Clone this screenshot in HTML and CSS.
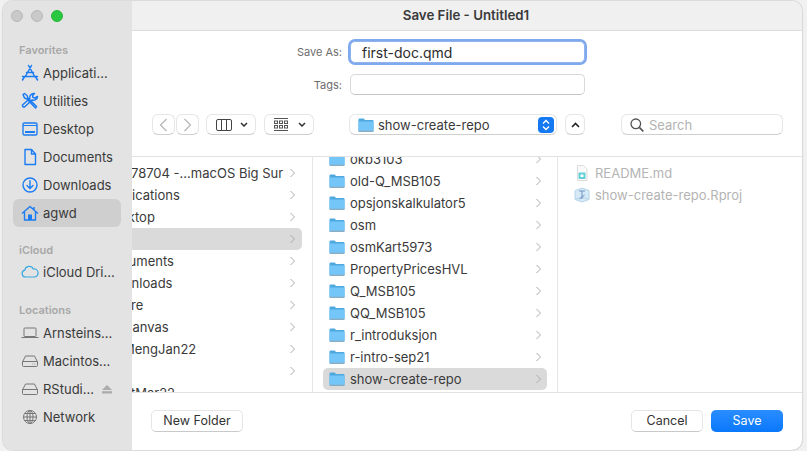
FILE: index.html
```html
<!DOCTYPE html>
<html lang="en">
<head>
  <meta charset="UTF-8">
  <title>Save File - Untitled1</title>
  <link rel="stylesheet" href="styles.css">
</head>
<body>
  <svg class="defs" width="0" height="0">
    <symbol id="folder" viewBox="0 0 16 14">
      <path d="M1.5 0.5h4.2l1.3 1.5h7.5a1 1 0 0 1 1 1v9.5a1 1 0 0 1-1 1h-13a1 1 0 0 1-1-1v-11a1 1 0 0 1 1-1z" fill="#4fa9df"/>
      <path d="M0.5 3.6h15v8.9a1 1 0 0 1-1 1h-13a1 1 0 0 1-1-1z" fill="#74c6f8"/>
      <path d="M0.5 12.8h15v0.4a0.6 0.6 0 0 1-0.6 0.6H1.1a0.6 0.6 0 0 1-0.6-0.6z" fill="#8aa3b3"/>
    </symbol>
    <symbol id="chev" viewBox="0 0 7 10">
      <path d="M1.5 1l4 4-4 4" fill="none" stroke="#ababab" stroke-width="1"/>
    </symbol>
  </svg>

  <div class="window">
    <aside class="sidebar">
      <div class="lights">
        <span class="light"></span>
        <span class="light"></span>
        <span class="light green"></span>
      </div>

      <h4 class="side-head">Favorites</h4>
      <ul class="side-list">
        <li class="side-item">
          <svg class="side-icon" viewBox="0 0 18 18" fill="none" stroke="#1b7cf3" stroke-width="1.5" stroke-linecap="round"><path d="M10.5 1.5L4 13M7.5 1.5L14 13M1.5 12.5h15M5.5 8.5h7M3 13.5l-1.5 2.5M15 13.5l1.5 2.5"/></svg>
          <span>Applicati...</span>
        </li>
        <li class="side-item">
          <svg class="side-icon" viewBox="0 0 18 18" fill="none" stroke="#1b7cf3" stroke-width="1.5" stroke-linejoin="round"><path d="M2 2.5L3.5 1.5 6 3.5 7 6 15.5 14.5 14.5 16 6 7 3.500 6z"/><path d="M16.500 4.500a4 4 0 0 1-5.500 3.500L3.500 15a1.600 1.600 0 0 1-2-2L8.800 6.500a4 4 0 0 1 4.700-5L11.500 3.500l0.500 2 2 0.500z"/></svg>
          <span>Utilities</span>
        </li>
        <li class="side-item">
          <svg class="side-icon" viewBox="0 0 18 18" fill="none" stroke="#1b7cf3" stroke-width="1.400"><rect x="2" y="3" width="14" height="12" rx="1.500"/><path d="M2 5.500h14" stroke-width="1.200"/><rect x="4" y="11" width="10" height="2" fill="#1b7cf3" stroke="none"/></svg>
          <span>Desktop</span>
        </li>
        <li class="side-item">
          <svg class="side-icon" viewBox="0 0 18 18" fill="none" stroke="#1b7cf3" stroke-width="1.400" stroke-linejoin="round"><path d="M4 1.500h6.500L14.500 6v10.500H4z"/><path d="M10.500 1.500V6h4"/></svg>
          <span>Documents</span>
        </li>
        <li class="side-item">
          <svg class="side-icon" viewBox="0 0 18 18" fill="none" stroke="#1b7cf3" stroke-width="1.400" stroke-linecap="round"><circle cx="9" cy="9" r="7"/><path d="M9 4.800v7.400M6 9.500l3 3 3-3"/></svg>
          <span>Downloads</span>
        </li>
        <li class="side-item active">
          <svg class="side-icon" viewBox="0 0 18 18" fill="none" stroke="#1b7cf3" stroke-width="1.400" stroke-linejoin="round"><path d="M1 9.500L9 2.500l8 7M3.500 8v8h11V8M13 3v2.500"/><rect x="7" y="10.500" width="4" height="5.500" fill="#1b7cf3" stroke="none"/></svg>
          <span>agwd</span>
        </li>
      </ul>

      <h4 class="side-head head-icloud">iCloud</h4>
      <ul class="side-list">
        <li class="side-item">
          <svg class="side-icon" viewBox="0 0 18 18" fill="none" stroke="#3aa8e2" stroke-width="1.200"><path d="M4.500 14a3.500 3.500 0 0 1-0.700-6.900A4.500 4.500 0 0 1 12.300 6a4 4 0 0 1 1.500 8z"/></svg>
          <span>iCloud Dri...</span>
        </li>
      </ul>

      <h4 class="side-head head-locations">Locations</h4>
      <ul class="side-list">
        <li class="side-item">
          <svg class="side-icon" viewBox="0 0 18 18" fill="none" stroke="#777" stroke-width="1"><rect x="3" y="4" width="12" height="8.500" rx="0.800"/><path d="M0.500 13.500h17"/></svg>
          <span>Arnsteins...</span>
        </li>
        <li class="side-item">
          <svg class="side-icon" viewBox="0 0 18 18" fill="none" stroke="#777" stroke-width="1"><path d="M4.500 4h9l3 6v3.500a1 1 0 0 1-1 1h-13a1 1 0 0 1-1-1V10z"/><path d="M1.500 9.500h15M11.500 12h0.700M13.500 12h0.700"/></svg>
          <span>Macintos...</span>
        </li>
        <li class="side-item">
          <svg class="side-icon" viewBox="0 0 18 18" fill="none" stroke="#777" stroke-width="1"><path d="M4.500 4h9l3 6v3.500a1 1 0 0 1-1 1h-13a1 1 0 0 1-1-1V10z"/><path d="M1.500 9.500h15"/></svg>
          <span>RStudi...</span>
          <svg class="eject" viewBox="0 0 10 9" fill="#ababab"><path d="M5 0l5 5H0z"/><rect y="6.200" width="10" height="2.300"/></svg>
        </li>
        <li class="side-item">
          <svg class="side-icon" viewBox="0 0 18 18" fill="none" stroke="#777" stroke-width="1"><circle cx="9" cy="9" r="6.500"/><ellipse cx="9" cy="9" rx="3" ry="6.500"/><path d="M9 2.500v13M2.500 9h13M3.500 5.500h11M3.500 12.500h11"/></svg>
          <span>Network</span>
        </li>
      </ul>
    </aside>

    <main class="main">
      <header class="titlebar">Save File - Untitled1</header>

      <form class="save-form">
        <label class="form-label" for="saveAs">Save As:</label>
        <input class="form-field focused" id="saveAs" type="text" value="first-doc.qmd">
        <label class="form-label" for="tags">Tags:</label>
        <input class="form-field" id="tags" type="text">
      </form>

      <div class="toolbar">
        <div class="nav-pair">
          <button class="tool-btn nav-btn" type="button"><svg width="9" height="14" viewBox="0 0 9 14" fill="none" stroke="#b5b5b5" stroke-width="1.200"><path d="M7.500 1L1.500 7l6 6"/></svg></button>
          <button class="tool-btn nav-btn" type="button"><svg width="9" height="14" viewBox="0 0 9 14" fill="none" stroke="#b5b5b5" stroke-width="1.200"><path d="M1.500 1l6 6-6 6"/></svg></button>
        </div>
        <button class="tool-btn view-btn first-view" type="button">
          <svg width="16" height="12" viewBox="0 0 16 12" fill="none" stroke="#444" stroke-width="1"><rect x="0.500" y="0.500" width="15" height="11" rx="1.500"/><path d="M5.500 0.500v11M10.500 0.500v11"/></svg>
          <svg class="caret" width="8" height="5" viewBox="0 0 8 5" fill="none" stroke="#333" stroke-width="1.500"><path d="M1 1l3 3 3-3"/></svg>
        </button>
        <button class="tool-btn view-btn" type="button">
          <svg width="14" height="13" viewBox="0 0 14 13" fill="none" stroke="#555" stroke-width="1"><path d="M0 0.500h14M0 12.500h14"/><rect x="0.500" y="3" width="3" height="2.500"/><rect x="5.500" y="3" width="3" height="2.500"/><rect x="10.500" y="3" width="3" height="2.500"/><rect x="0.500" y="7.500" width="3" height="2.500"/><rect x="5.500" y="7.500" width="3" height="2.500"/><rect x="10.500" y="7.500" width="3" height="2.500"/></svg>
          <svg class="caret" width="8" height="5" viewBox="0 0 8 5" fill="none" stroke="#333" stroke-width="1.500"><path d="M1 1l3 3 3-3"/></svg>
        </button>
        <button class="tool-btn path-btn" type="button">
          <svg class="folder" width="16" height="14"><use href="#folder"/></svg>
          <span>show-create-repo</span>
          <span class="stepper"><svg width="8" height="12" viewBox="0 0 8 12" fill="none" stroke="#fff" stroke-width="1.400"><path d="M1 4.500l3-3 3 3M1 7.500l3 3 3-3"/></svg></span>
        </button>
        <button class="tool-btn up-btn" type="button"><svg width="9" height="6" viewBox="0 0 9 6" fill="none" stroke="#222" stroke-width="1.600"><path d="M1 5l3.500-3.500L8 5"/></svg></button>
        <div class="search">
          <svg width="14" height="14" viewBox="0 0 14 14" fill="none" stroke="#555" stroke-width="1.300"><circle cx="5.800" cy="5.800" r="4.800"/><path d="M9.300 9.300L13.300 13.300" stroke-width="1.700"/></svg>
          <span>Search</span>
        </div>
      </div>

      <section class="browser">
        <div class="col col-one">
          <ul class="rows">
            <li class="row"><span class="from-edge">78704 -...macOS Big Sur</span><svg class="chev"><use href="#chev"/></svg></li>
            <li class="row"><span>Applications</span><svg class="chev"><use href="#chev"/></svg></li>
            <li class="row"><span>Desktop</span><svg class="chev"><use href="#chev"/></svg></li>
            <li class="row selected"><svg class="chev"><use href="#chev"/></svg></li>
            <li class="row"><span>Documents</span><svg class="chev"><use href="#chev"/></svg></li>
            <li class="row"><span>Downloads</span><svg class="chev"><use href="#chev"/></svg></li>
            <li class="row"><span class="from-edge">re</span><svg class="chev"><use href="#chev"/></svg></li>
            <li class="row"><span class="cut-first">Canvas</span><svg class="chev"><use href="#chev"/></svg></li>
            <li class="row"><span class="cut-first">MengJan22</span><svg class="chev"><use href="#chev"/></svg></li>
            <li class="row"><svg class="chev"><use href="#chev"/></svg></li>
            <li class="row"><span class="from-edge last-row">tMar22</span></li>
          </ul>
        </div>

        <div class="col col-two">
          <ul class="rows">
            <li class="row"><svg class="folder"><use href="#folder"/></svg><span>okb3103</span><svg class="chev"><use href="#chev"/></svg></li>
            <li class="row"><svg class="folder"><use href="#folder"/></svg><span>old-Q_MSB105</span><svg class="chev"><use href="#chev"/></svg></li>
            <li class="row"><svg class="folder"><use href="#folder"/></svg><span>opsjonskalkulator5</span><svg class="chev"><use href="#chev"/></svg></li>
            <li class="row"><svg class="folder"><use href="#folder"/></svg><span>osm</span><svg class="chev"><use href="#chev"/></svg></li>
            <li class="row"><svg class="folder"><use href="#folder"/></svg><span>osmKart5973</span><svg class="chev"><use href="#chev"/></svg></li>
            <li class="row"><svg class="folder"><use href="#folder"/></svg><span>PropertyPricesHVL</span><svg class="chev"><use href="#chev"/></svg></li>
            <li class="row"><svg class="folder"><use href="#folder"/></svg><span>Q_MSB105</span><svg class="chev"><use href="#chev"/></svg></li>
            <li class="row"><svg class="folder"><use href="#folder"/></svg><span>QQ_MSB105</span><svg class="chev"><use href="#chev"/></svg></li>
            <li class="row"><svg class="folder"><use href="#folder"/></svg><span>r_introduksjon</span><svg class="chev"><use href="#chev"/></svg></li>
            <li class="row"><svg class="folder"><use href="#folder"/></svg><span>r-intro-sep21</span><svg class="chev"><use href="#chev"/></svg></li>
            <li class="row selected"><svg class="folder"><use href="#folder"/></svg><span>show-create-repo</span><svg class="chev"><use href="#chev"/></svg></li>
          </ul>
        </div>

        <div class="col col-three">
          <ul class="rows">
            <li class="row">
              <svg class="file-icon" viewBox="0 0 16 16"><path d="M3.500 0.500h6l3.500 3.500v11.500h-9.500z" fill="#fafafa" stroke="#dcdcdc"/><rect x="4.500" y="7.500" width="7" height="6.500" rx="1" fill="#62cfd6"/><rect x="6.500" y="9.500" width="3" height="2.500" fill="#fff"/></svg>
              <span>README.md</span>
            </li>
            <li class="row">
              <svg class="file-icon" viewBox="0 0 16 16"><path d="M1 3.500L8 1l7 2.500v9L8 15l-7-2.500z" fill="#d6e9f6" stroke="#b4d4ea"/><path d="M1 12.500L8 10l7 2.500" fill="none" stroke="#b4d4ea"/><path d="M5 4h6M8 4v8M5.500 12l5-4" stroke="#6e93c4" stroke-width="1" fill="none"/></svg>
              <span>show-create-repo.Rproj</span>
            </li>
          </ul>
        </div>
      </section>

      <footer class="footer">
        <button class="foot-btn" type="button">New Folder</button>
        <button class="foot-btn cancel" type="button">Cancel</button>
        <button class="foot-btn save" type="button">Save</button>
      </footer>
    </main>
  </div>
</body>
</html>
```

FILE: styles.css
```css
* {
  box-sizing: border-box;
}
html, body {
  height: 100%;
}
body {
  margin: 0;
  padding: 1px 5px 1px 3px;
  background: #f1f1f1;
  overflow: hidden;
  font-family: Inter, "Liberation Sans", sans-serif;
  font-size: 13px;
  color: #3a3a3a;
}
ul {
  list-style: none;
  margin: 0;
  padding: 0;
}
.defs {
  position: absolute;
}
.window {
  display: flex;
  height: 100%;
  background: #fff;
  border-radius: 10px;
  overflow: hidden;
  box-shadow: 0 0 2px rgba(0,0,0,0.35);
}

/* sidebar */
.sidebar {
  flex: 0 0 129px;
  background: #e3e3e3;
  padding: 9px 11px 0 10px;
}
.lights {
  display: flex;
  gap: 8px;
  margin-left: -2px;
}
.light {
  width: 12px;
  height: 12px;
  border-radius: 50%;
  background: #c9c9c9;
  border: 1px solid #b8b8b8;
}
.light.green {
  background: #2ac73f;
  border-color: #25b538;
}
.side-head {
  margin: 21px 0 0 6px;
  height: 15px;
  line-height: 15px;
  font-size: 11px;
  font-weight: 600;
  color: #a8a8a8;
}
.head-icloud {
  margin-top: 16px;
}
.head-locations {
  margin-top: 17px;
}
.side-item {
  display: flex;
  align-items: center;
  height: 28px;
  padding-left: 8px;
  border-radius: 6px;
  white-space: nowrap;
}
.side-list {
  margin-top: 1px;
}
.head-icloud + .side-list {
  margin-top: 0;
}
.side-item.active {
  background: #cfcfcf;
}
.side-icon {
  flex: none;
  width: 18px;
  height: 18px;
  margin-right: 4px;
}
.eject {
  width: 10px;
  height: 9px;
  margin-left: 8px;
}

/* title and form */
.main {
  flex: 1;
  display: flex;
  flex-direction: column;
  min-width: 0;
}
.titlebar {
  flex: none;
  height: 30px;
  line-height: 29px;
  text-align: center;
  padding-right: 2px;
  font-size: 13.3px;
  font-weight: 600;
  background: #f0f0f0;
  border-bottom: 1px solid #dcdcdc;
}
.save-form {
  flex: none;
  display: grid;
  grid-template-columns: 210px 235px;
  column-gap: 8px;
  row-gap: 11px;
  align-items: center;
  padding-top: 10px;
}
.form-label {
  text-align: right;
  font-size: 11px;
  color: #6d6d6d;
}
.form-field {
  height: 21px;
  padding: 0 11px;
  border: 1px solid #d9d9d9;
  border-bottom-color: #c4c4c4;
  border-radius: 5px;
  background: #fff;
  font: inherit;
  color: #2c2c2c;
}
.form-field.focused {
  height: 22px;
  font-size: 14px;
  border-color: #8db4ee;
  box-shadow: 0 0 0 2px #7fa9ec;
  outline: none;
}

/* toolbar */
.toolbar {
  flex: none;
  display: flex;
  align-items: center;
  margin-top: 19px;
  padding-left: 20px;
  height: 21px;
}
.tool-btn {
  display: flex;
  align-items: center;
  height: 21px;
  padding: 0;
  background: #fff;
  border: 1px solid #e6e6e6;
  border-bottom-color: #cfcfcf;
  border-radius: 6px;
  font: inherit;
  color: #3a3a3a;
}
.nav-pair {
  display: flex;
  gap: 1px;
}
.nav-btn {
  width: 23px;
  justify-content: center;
}
.view-btn {
  width: 50px;
  margin-left: 8px;
  padding-left: 9px;
}
.first-view {
  margin-left: 7px;
}
.caret {
  margin-left: auto;
  margin-right: 7px;
}
.path-btn {
  width: 208px;
  margin-left: 35px;
  padding-left: 8px;
}
.path-btn .folder {
  margin-right: 4px;
}
.stepper {
  display: flex;
  align-items: center;
  justify-content: center;
  width: 16px;
  height: 16px;
  margin-left: auto;
  margin-right: 2px;
  background: #1579f2;
  border-radius: 4px;
}
.up-btn {
  width: 20px;
  margin-left: 8px;
  justify-content: center;
}
.search {
  display: flex;
  align-items: center;
  width: 162px;
  height: 21px;
  margin-left: 36px;
  padding-left: 8px;
  background: #fff;
  border: 1px solid #e6e6e6;
  border-bottom-color: #cfcfcf;
  border-radius: 6px;
  color: #b3b3b3;
}
.search svg {
  margin-right: 5px;
}

/* column browser */
.browser {
  flex: none;
  display: flex;
  height: 237px;
  margin-top: 21px;
  border-top: 1px solid #e2e2e2;
  border-bottom: 1px solid #e2e2e2;
}
.col {
  overflow: hidden;
  border-right: 1px solid #e6e6e6;
}
.col-one {
  flex: 0 0 181px;
}
.col-two {
  flex: 0 0 245px;
}
.col-three {
  flex: 1;
  border-right: none;
}
.row {
  display: flex;
  align-items: center;
  height: 22px;
  border-radius: 5px;
  white-space: nowrap;
}
.row.selected {
  background: #dadada;
}
.chev {
  flex: none;
  width: 7px;
  height: 10px;
  margin-left: auto;
}

.col-one .rows {
  padding-top: 5px;
}
.col-one .row {
  margin: 0 10px 0 -10px;
  padding-right: 6px;
}
.col-one .row span {
  margin-left: -18px;
}
.col-one .row .from-edge {
  margin-left: 9px;
}
.col-one .row .cut-first {
  margin-left: 1px;
}

.col-two .rows {
  margin-top: -9px;
}
.col-two .row {
  margin: 0 10px;
  padding: 0 5px 0 6px;
}
.folder {
  flex: none;
  width: 16px;
  height: 14px;
  margin-right: 5px;
}

.col-three .rows {
  padding-top: 5px;
}
.col-three .row {
  padding-left: 16px;
  color: #b4b4b4;
}
.file-icon {
  flex: none;
  width: 16px;
  height: 16px;
  margin-right: 5px;
}

/* footer */
.footer {
  flex: 1;
  display: flex;
  align-items: center;
  padding: 0 19px 2px 19px;
}
.foot-btn {
  height: 22px;
  background: #fff;
  border: 1px solid #e6e6e6;
  border-bottom-color: #c9c9c9;
  border-radius: 5px;
  font: inherit;
  font-size: 12.5px;
  color: #333;
}
.foot-btn:first-child {
  width: 92px;
  margin-right: auto;
}
.cancel {
  width: 72px;
}
.save {
  width: 72px;
  margin-left: 8px;
  border: none;
  background: linear-gradient(#2a8dff, #0a78fb);
  color: #fff;
}
```
